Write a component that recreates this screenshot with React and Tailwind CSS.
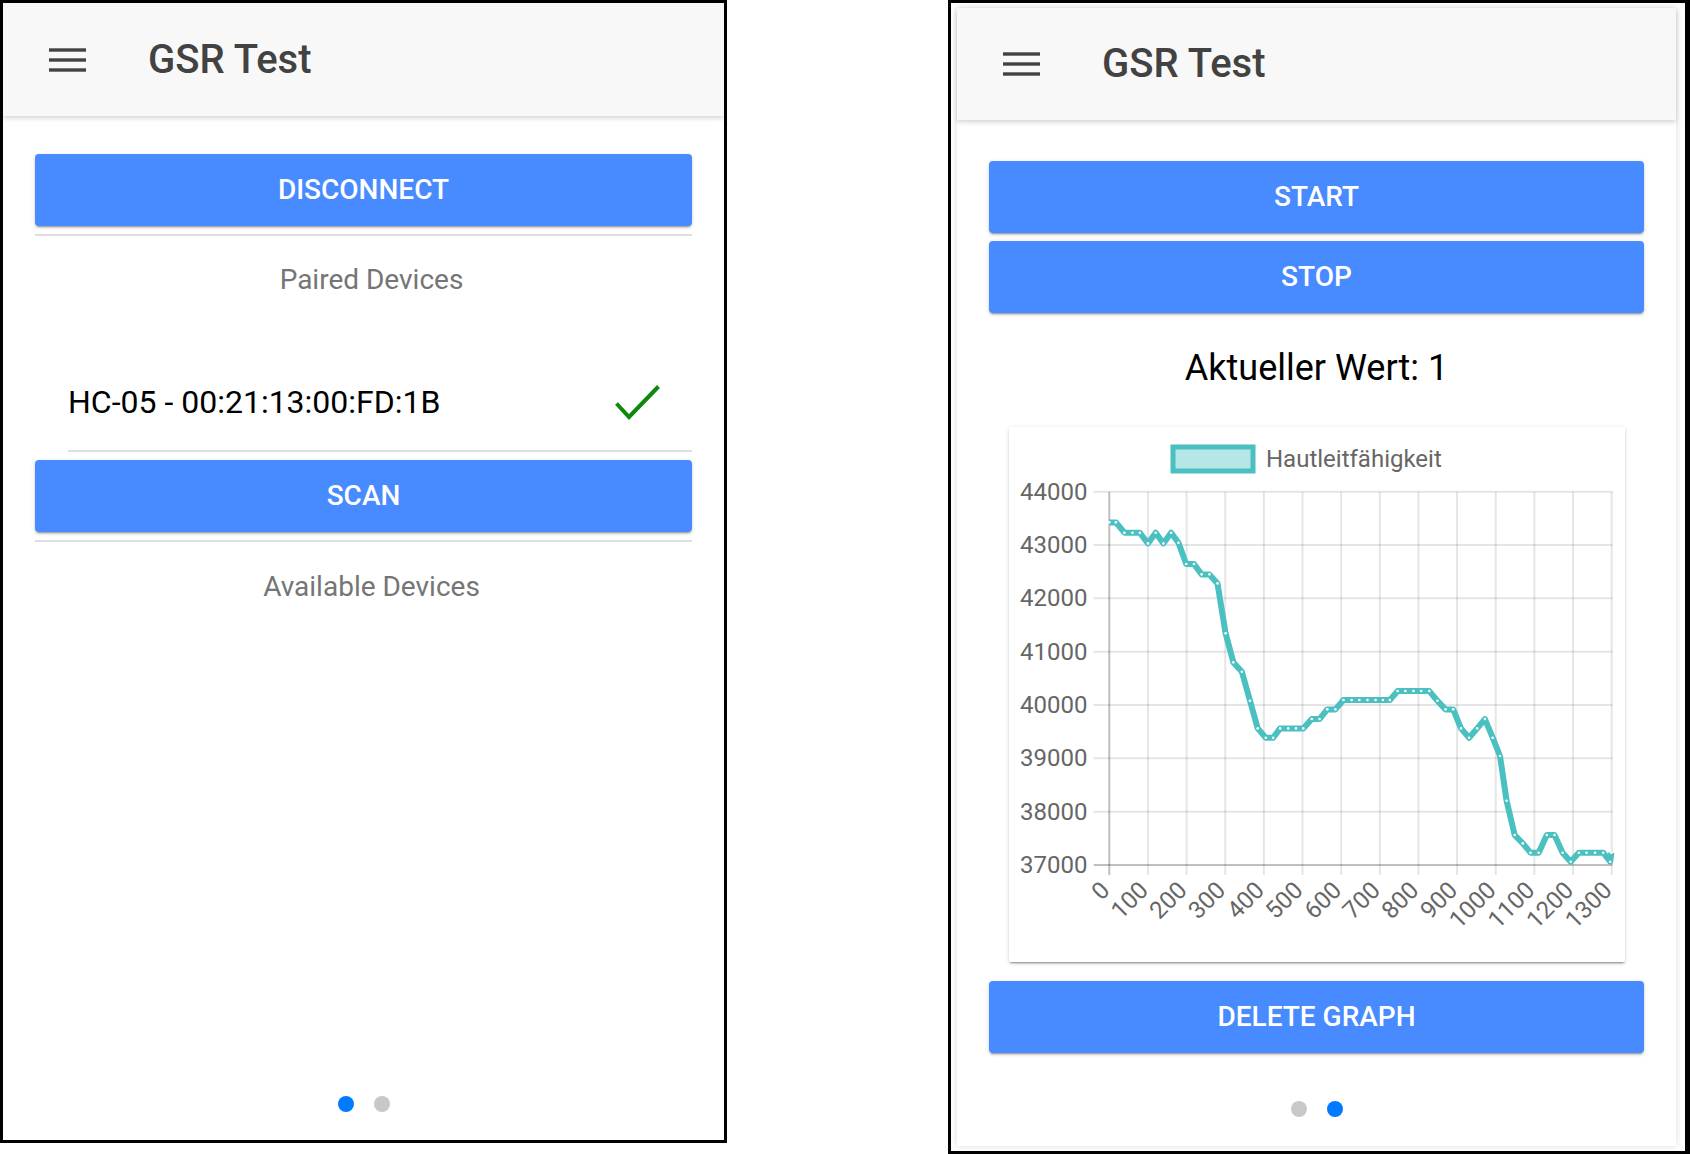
import React from "react";

const TEAL = "#4bc0c0";

const samples = [
  [0, 43425], [17, 43425], [39, 43231], [60, 43231], [79, 43231], [100, 43031],
  [120, 43231], [140, 43031], [160, 43231], [179, 43044], [199, 42644], [219, 42644],
  [239, 42450], [259, 42450], [280, 42281], [301, 41344], [321, 40800], [343, 40625],
  [364, 40081], [384, 39562], [405, 39387], [424, 39387], [442, 39562], [463, 39562],
  [483, 39562], [502, 39562], [524, 39737], [544, 39737], [564, 39919], [585, 39919],
  [606, 40094], [627, 40094], [647, 40094], [668, 40094], [689, 40094], [708, 40094],
  [726, 40094], [746, 40262], [766, 40262], [787, 40262], [807, 40262], [828, 40262],
  [849, 40081], [870, 39919], [890, 39919], [910, 39562], [931, 39387], [952, 39562],
  [972, 39737], [992, 39387], [1011, 39044], [1028, 38206], [1049, 37562], [1070, 37406],
  [1090, 37231], [1111, 37231], [1132, 37562], [1152, 37562], [1173, 37231], [1194, 37062],
  [1215, 37231], [1235, 37231], [1257, 37231], [1278, 37231], [1296, 37062], [1299, 37231],
];

const yTicks = [44000, 43000, 42000, 41000, 40000, 39000, 38000, 37000];
const xTicks = [0, 100, 200, 300, 400, 500, 600, 700, 800, 900, 1000, 1100, 1200, 1300];

const X0 = 100.3;
const XS = 38.646 / 100;
const Y0 = 64.7;
const YS = 53.333 / 1000;
const px = (t) => X0 + t * XS;
const py = (v) => Y0 + (44000 - v) * YS;

function Hamburger() {
  return (
    <svg width="37" height="24" viewBox="0 0 37 24">
      <rect x="0" y="0.3" width="37" height="3.4" fill="#424242" />
      <rect x="0" y="10.3" width="37" height="3.4" fill="#424242" />
      <rect x="0" y="20.3" width="37" height="3.4" fill="#424242" />
    </svg>
  );
}

function Header({ height }) {
  return (
    <div
      className={`relative z-10 flex shrink-0 items-center bg-[#f8f8f8] shadow-[0_2px_5px_rgba(0,0,0,0.18)] ${height}`}
    >
      <div className="ml-[46px] flex">
        <Hamburger />
      </div>
      <h1 className="ml-[62px] text-[40px] font-medium leading-[48px] text-[#424242]">GSR Test</h1>
    </div>
  );
}

function Btn({ children }) {
  return (
    <button className="flex h-[72px] w-full items-center justify-center rounded-[4px] bg-[#488aff] text-[28px] font-medium text-white shadow-[0_2px_2px_0_rgba(0,0,0,0.14),0_3px_1px_-2px_rgba(0,0,0,0.2),0_1px_5px_0_rgba(0,0,0,0.12)]">
      {children}
    </button>
  );
}

function Dots({ active }) {
  return (
    <div className="flex justify-center gap-[20px]">
      {[0, 1].map((i) => (
        <span
          key={i}
          className={i === active ? "h-[16px] w-[16px] rounded-full bg-[#007aff]" : "h-[16px] w-[16px] rounded-full bg-[#c8c8c8]"}
        />
      ))}
    </div>
  );
}

function Check() {
  return (
    <svg width="46" height="36" viewBox="0 0 46 36" className="mr-[32px]">
      <polyline
        points="2.5,19.5 15,33 44.5,2.5"
        fill="none"
        stroke="#0d8a0d"
        strokeWidth="4"
        strokeLinejoin="miter"
      />
    </svg>
  );
}

function Chart() {
  const line = samples.map(([t, v]) => `${px(t).toFixed(1)},${py(v).toFixed(1)}`).join(" ");
  return (
    <svg width="616" height="535" viewBox="0 0 616 535">
      {/* legend */}
      <rect x="164" y="20" width="80" height="24" fill="#b7e6e6" stroke={TEAL} strokeWidth="5" />
      <text x="257" y="40.3" fontSize="24" fill="#666">
        Hautleitfähigkeit
      </text>

      {/* grid */}
      {yTicks.map((v, k) => (
        <g key={v}>
          <line
            x1="84.7"
            x2="603.5"
            y1={py(v)}
            y2={py(v)}
            stroke={k === yTicks.length - 1 ? "rgba(0,0,0,0.25)" : "rgba(0,0,0,0.1)"}
            strokeWidth="2"
          />
          <text x="78.5" y={py(v)} fontSize="24" fill="#666" textAnchor="end" dominantBaseline="central">
            {v}
          </text>
        </g>
      ))}
      {xTicks.map((t, j) => (
        <g key={t}>
          <line
            x1={px(t)}
            x2={px(t)}
            y1="64.7"
            y2="448"
            stroke={j === 0 ? "rgba(0,0,0,0.25)" : "rgba(0,0,0,0.1)"}
            strokeWidth="2"
          />
          <text
            x={px(t) - 4}
            y="459"
            fontSize="24"
            fill="#666"
            textAnchor="end"
            dominantBaseline="central"
            transform={`rotate(-45 ${px(t) - 4} 459)`}
          >
            {t}
          </text>
        </g>
      ))}

      {/* data */}
      <polyline points={line} fill="none" stroke={TEAL} strokeWidth="6" strokeLinejoin="round" />
      {samples.map(([t, v]) => (
        <circle key={t} cx={px(t)} cy={py(v)} r="1.3" fill="#fff" />
      ))}
    </svg>
  );
}

function ConnectPage() {
  return (
    <div className="flex h-[1143px] w-[727px] shrink-0 flex-col overflow-hidden border-[3px] border-black bg-white">
      <Header height="h-[113px]" />
      <div className="mx-[32px] mt-[38px]">
        <Btn>DISCONNECT</Btn>
      </div>
      <div className="mx-[32px] mt-[8px] h-[2px] bg-[#dedede]" />
      <p className="mt-[28px] pl-[16px] text-center text-[28px] leading-[32px] text-[#757575]">Paired Devices</p>

      <div className="ml-[65px] mr-[32px] mt-[86px]">
        <div className="flex h-[40px] items-center justify-between">
          <span className="text-[32px] leading-[40px] text-black">HC-05 - 00:21:13:00:FD:1B</span>
          <Check />
        </div>
        <div className="mt-[28px] h-[2px] bg-[#dedede]" />
      </div>

      <div className="mx-[32px] mt-[8px]">
        <Btn>SCAN</Btn>
      </div>
      <div className="mx-[32px] mt-[8px] h-[2px] bg-[#dedede]" />
      <p className="mt-[29px] pl-[16px] text-center text-[28px] leading-[32px] text-[#757575]">Available Devices</p>

      <div className="mb-[28px] mt-auto">
        <Dots active={0} />
      </div>
    </div>
  );
}

function GraphPage() {
  return (
    <div className="flex h-[1154px] w-[742px] shrink-0 border-[3px] border-r-[5px] border-black bg-white pb-[5px] pl-[6px] pr-[9px] pt-[5px]">
      <div className="flex flex-1 flex-col bg-white shadow-[0_0_7px_rgba(0,0,0,0.14)]">
        <Header height="h-[112px]" />
        <div className="mx-[32px] mt-[41px]">
          <Btn>START</Btn>
        </div>
        <div className="mx-[32px] mt-[8px]">
          <Btn>STOP</Btn>
        </div>
        <p className="mt-[33px] text-center text-[36px] leading-[44px] text-black">Aktueller Wert: 1</p>

        <div className="ml-[52px] mt-[37px] h-[535px] w-[616px] rounded-[2px] bg-white shadow-[0_2px_2px_0_rgba(0,0,0,0.14),0_3px_1px_-2px_rgba(0,0,0,0.2),0_1px_5px_0_rgba(0,0,0,0.12)]">
          <Chart />
        </div>

        <div className="mx-[32px] mt-[19px]">
          <Btn>DELETE GRAPH</Btn>
        </div>

        <div className="mb-[29px] mt-auto">
          <Dots active={1} />
        </div>
      </div>
    </div>
  );
}

export default function App() {
  return (
    <div className="flex h-[1154px] w-[1690px] items-start gap-[221px] overflow-hidden bg-white font-['Roboto',sans-serif]">
      <ConnectPage />
      <GraphPage />
    </div>
  );
}
